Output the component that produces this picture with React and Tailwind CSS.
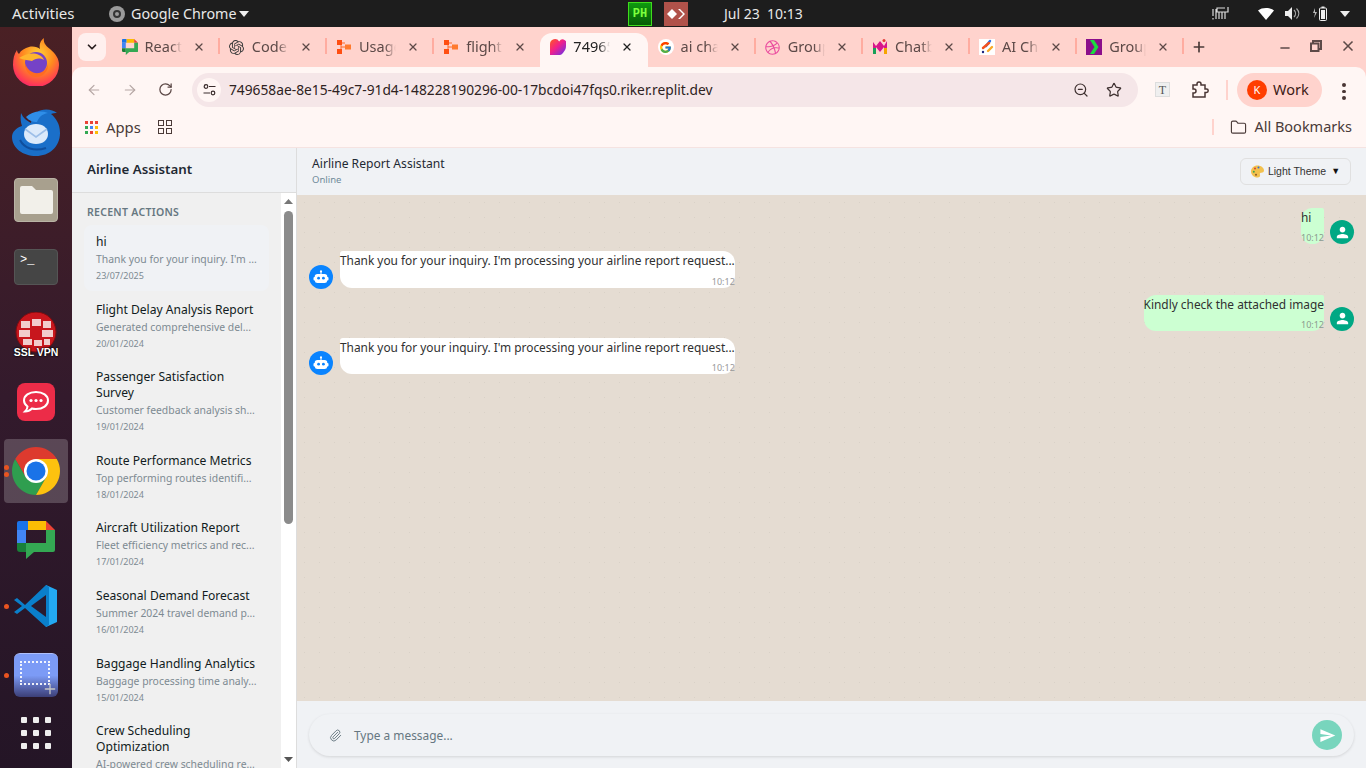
import React from "react";
import { ArrowLeft, ArrowRight, RotateCw, Star, ZoomOut, Folder, ChevronDown, X, Plus, Minus, Paperclip } from "lucide-react";
import { FcGoogle } from "react-icons/fc";
import { SiOpenai } from "react-icons/si";
import { FaDribbble } from "react-icons/fa";
import { MdPerson, MdSend } from "react-icons/md";

const chromeFont = "font-['Noto_Sans',sans-serif]";

const ChatIcon = ({ size = 16 }) => (
    <svg width={size} height={size} viewBox="0 0 38 38">
        <path d="M0 9V2a2 2 0 012-2h9v9z" fill="#1a73e8" />
        <path d="M11 0h18v9H11z" fill="#fbbc04" />
        <path d="M29 0l9 9h-9z" fill="#ea4335" />
        <path d="M0 9h9v13H0z" fill="#4285f4" />
        <path d="M0 22h9v9H3a3 3 0 01-3-3z" fill="#188038" />
        <path d="M29 9h9v20a2 2 0 01-2 2H17l-8 7V22h20z" fill="#34a853" />
    </svg>
);

const OrangeIcon = () => (
    <svg width="16" height="16" viewBox="0 0 16 16">
        <path d="M3 4h6M5 4v8M5 8h6" stroke="#ff6a2b" strokeWidth="1" fill="none" />
        <rect x="1" y="1" width="5" height="5" fill="#ff4f12" />
        <rect x="1" y="10" width="5" height="5" fill="#ff4f12" />
        <rect x="9" y="5.5" width="6" height="5" fill="#ff7a2e" />
    </svg>
);

const HeartIcon = () => (
    <svg width="16" height="16" viewBox="0 0 16 16">
        <defs>
            <linearGradient id="lov" x1="0" y1="0" x2="1" y2="1">
                <stop offset="0" stopColor="#ff5a1f" />
                <stop offset="0.45" stopColor="#f2208a" />
                <stop offset="1" stopColor="#5a32f5" />
            </linearGradient>
        </defs>
        <path d="M0 5a5 5 0 019.2-2.6A3.9 3.9 0 0116 7c0 2-.6 4-2 5.5-.8.9-1.8 3.5-4 3.5H0z" fill="url(#lov)" />
    </svg>
);

const MultiIcon = () => (
    <svg width="16" height="16" viewBox="0 0 16 16">
        <path d="M1 15V3l3 4 4-5 4 5 3-5v13h-3V8l-4 5-4-5v7z" fill="#d8168a" />
        <path d="M1 15V9h3v6z" fill="#18a058" />
        <path d="M12 15V9h3v6z" fill="#f5a400" />
        <circle cx="12" cy="1.5" r="1.5" fill="#e53935" />
    </svg>
);

const StrokesIcon = () => (
    <svg width="16" height="16" viewBox="0 0 16 16">
        <rect width="16" height="16" fill="#fff" />
        <path d="M7 7l4-5" stroke="#2b6de8" strokeWidth="2.4" strokeLinecap="round" />
        <path d="M4 9l6-5" stroke="#f4511e" strokeWidth="2.4" strokeLinecap="round" />
        <path d="M9 12l4-4" stroke="#f9a825" strokeWidth="2.4" strokeLinecap="round" />
        <circle cx="4" cy="13" r="1.2" fill="#1a237e" />
    </svg>
);

const ChevronIcon = () => (
    <svg width="16" height="16" viewBox="0 0 16 16">
        <rect width="16" height="16" fill="#8b0f8b" />
        <path d="M4 1h4l4.5 7L8 15H4l4.5-7z" fill="#1bdc3f" />
    </svg>
);

const tabs = [
    { title: "React", icon: <ChatIcon /> },
    { title: "Code", icon: <SiOpenai size={15} className="text-[#3c3c3c]" /> },
    { title: "Usage", icon: <OrangeIcon /> },
    { title: "flight", icon: <OrangeIcon /> },
    { title: "74965", icon: <HeartIcon />, active: true },
    { title: "ai chat", icon: <span className="w-4 h-4 rounded-full bg-white flex items-center justify-center"><FcGoogle size={13} /></span> },
    { title: "Group", icon: <FaDribbble size={15} className="text-[#ea4c9f]" /> },
    { title: "Chatbot", icon: <MultiIcon /> },
    { title: "AI Chat", icon: <StrokesIcon /> },
    { title: "Group", icon: <ChevronIcon /> },
];

const actions = [
    { title: "hi", desc: "Thank you for your inquiry. I'm ...", date: "23/07/2025", active: true },
    { title: "Flight Delay Analysis Report", desc: "Generated comprehensive del...", date: "20/01/2024" },
    { title: "Passenger Satisfaction Survey", desc: "Customer feedback analysis sh...", date: "19/01/2024" },
    { title: "Route Performance Metrics", desc: "Top performing routes identifi...", date: "18/01/2024" },
    { title: "Aircraft Utilization Report", desc: "Fleet efficiency metrics and rec...", date: "17/01/2024" },
    { title: "Seasonal Demand Forecast", desc: "Summer 2024 travel demand p...", date: "16/01/2024" },
    { title: "Baggage Handling Analytics", desc: "Baggage processing time analy...", date: "15/01/2024" },
    { title: "Crew Scheduling Optimization", desc: "AI-powered crew scheduling re...", date: "14/01/2024" },
];

const BotIcon = () => (
    <svg width="16" height="16" viewBox="0 0 16 16" fill="#fff">
        <circle cx="8" cy="2.4" r="1.1" />
        <rect x="7.5" y="2.5" width="1" height="3" />
        <path d="M4.5 5h7A2.8 2.8 0 0114.3 7.8v.2h.2a1 1 0 011 1v1.5a1 1 0 01-1 1h-.2A2.8 2.8 0 0111.5 14h-7a2.8 2.8 0 01-2.8-2.5h-.2a1 1 0 01-1-1V9a1 1 0 011-1h.2v-.2A2.8 2.8 0 014.5 5z" />
        <circle cx="5.6" cy="9.2" r="1.4" fill="#0a84ff" />
        <circle cx="10.4" cy="9.2" r="1.4" fill="#0a84ff" />
    </svg>
);

const PaletteIcon = () => (
    <svg width="13" height="13" viewBox="0 0 13 13">
        <path d="M6.5 0.500C10 0.500 13 2.800 13 5.500c0 1.800-1.500 2.300-3 2.200-1.200 0-1.500 1-1 2 .5 1.300-.5 2.800-2.500 2.800C2.800 12.500 0 9.800 0 6.500S2.800 0.500 6.500 0.500z" fill="#f2c14e" />
        <circle cx="4" cy="3.500" r="1" fill="#d8402f" />
        <circle cx="7.500" cy="2.500" r="1" fill="#2f6fd8" />
        <circle cx="2.800" cy="6.800" r="1" fill="#3fa34d" />
        <circle cx="5" cy="9.800" r="1" fill="#8a5a2b" />
    </svg>
);

const FirefoxLogo = () => (
    <svg width="46" height="48" viewBox="0 0 46 48">
        <defs>
            <radialGradient id="ffa" cx="0.55" cy="0.35" r="0.75">
                <stop offset="0" stopColor="#ffd43a" />
                <stop offset="0.45" stopColor="#ff8a1f" />
                <stop offset="0.8" stopColor="#ff3a55" />
                <stop offset="1" stopColor="#e3127c" />
            </radialGradient>
        </defs>
        <path d="M31 0c-1 5 2 8 6 11 6 5 9 10 9 16a23 22 0 01-46 0C0 21 1 16 4 12c0 2 1 3 2 4 2-4 6-6 10-7 4-1 9 0 11 2-1-4 0-8 4-11z" fill="url(#ffa)" />
        <circle cx="23" cy="25" r="11" fill="#7542c7" />
        <path d="M6 20c6-4 14-6 20-3 3 1 4 3 5 5-5-3-9-1-12 1-3-1-8-1-13-3z" fill="#ffb52e" />
        <path d="M12 25c2 7 8 11 14 10 5-1 9-5 9-10 1 8-5 14-12 14-6 0-11-6-11-14z" fill="#ff6b22" />
    </svg>
);

const ThunderbirdLogo = () => (
    <svg width="48" height="48" viewBox="0 0 48 48">
        <path d="M9 5c-1 6 0 10 1 13C4 20 0 24 0 29c0 11 11 19 24 19s24-9 24-23c0-9-4-15-9-19 2-1 4-1 6-1-5-4-15-5-21 0-3 2-5 6-5 10-4-2-8-5-10-10z" fill="#1a6fc9" />
        <path d="M14 9c5-5 14-7 22-4-6 1-9 4-11 9-4 0-8-1-11-5z" fill="#2f8ee8" />
        <path d="M12 26c0-6 5-10 12-10s12 4 12 10-5 10-12 10-12-4-12-10z" fill="#dceafa" />
        <path d="M13 21l11 8 11-8" stroke="#9dbfe8" strokeWidth="1.6" fill="none" />
        <path d="M8 32c4 8 14 12 26 8" stroke="#0f4f9e" strokeWidth="2" fill="none" />
    </svg>
);

const FilesLogo = () => (
    <div className="w-11 h-11 rounded bg-[#a8a08e] flex items-center justify-center border border-[#b9b3a5]">
        <svg width="33" height="28" viewBox="0 0 33 28">
            <path d="M2 0h10l4 4h15a2 2 0 012 2v20a2 2 0 01-2 2H2a2 2 0 01-2-2V2a2 2 0 012-2z" fill="#f2f0ea" />
        </svg>
    </div>
);

const TerminalLogo = () => (
    <div className="w-11 h-9 rounded bg-[#454545] border border-[#555] px-[5px] pt-[3px] font-['Liberation_Mono',monospace] text-[12px] leading-[14px] text-white">
        &gt;_
    </div>
);

const SslLogo = () => (
    <div className="relative w-11 h-12 flex justify-center">
        <svg width="44" height="44" viewBox="0 0 44 44">
            <circle cx="22" cy="20" r="20" fill="#c8161d" />
            <circle cx="22" cy="20" r="20" fill="none" stroke="#7d0c10" strokeWidth="1" />
            <g fill="#f2cccc">
                <rect x="7" y="9" width="9" height="7" /><rect x="18" y="7" width="9" height="7" /><rect x="29" y="9" width="8" height="7" />
                <rect x="5" y="18" width="11" height="7" /><rect x="28" y="18" width="11" height="7" />
                <rect x="9" y="27" width="9" height="6" /><rect x="20" y="28" width="8" height="6" /><rect x="30" y="27" width="6" height="6" />
            </g>
        </svg>
        <span className="absolute bottom-[3px] left-[-2px] right-[-2px] text-center font-['Liberation_Sans',sans-serif] font-bold text-[10.500px] leading-none text-white [text-shadow:0_0_2px_#000,0_0_2px_#000]">SSL VPN</span>
    </div>
);

const RocketLogo = () => (
    <div className="w-[38px] h-[38px] rounded-lg bg-[#ec2c48] flex items-center justify-center">
        <svg width="28" height="24" viewBox="0 0 28 24">
            <path d="M14 2c7 0 12 3.500 12 8.500S21 19 14 19c-1.500 0-3-.2-4-.5-1.500 1.500-4 3-7 3 1.500-1.500 2.500-3.500 2.500-5C3.500 15 2 13 2 10.500 2 5.500 7 2 14 2z" fill="none" stroke="#fff" strokeWidth="2" />
            <circle cx="9" cy="10.500" r="1.600" fill="#fff" /><circle cx="14" cy="10.500" r="1.600" fill="#fff" /><circle cx="19" cy="10.500" r="1.600" fill="#fff" />
        </svg>
    </div>
);

const ChromeLogo = () => (
    <svg width="48" height="48" viewBox="0 0 48 48">
        <path d="M44.780 12A24 24 0 003.220 12L13.600 30 24 12z" fill="#dd3a2e" />
        <path d="M3.220 12A24 24 0 0024 48L34.400 30H13.600z" fill="#2f9e4f" />
        <path d="M44.780 12A24 24 0 0124 48L34.400 30 24 12z" fill="#fdc20f" />
        <circle cx="24" cy="24" r="12" fill="#fff" />
        <circle cx="24" cy="24" r="9.500" fill="#1a73e8" />
    </svg>
);

const VscodeLogo = () => (
    <svg width="44" height="42" viewBox="0 0 44 42">
        <path d="M32 0l11 5v32l-11 5z" fill="#23a9f2" />
        <path d="M32 0L11 20 3 13l-3 2 8 6-8 6 3 2 8-6 21 19 3-2V2z" fill="#0a7fcb" />
        <path d="M32 10v22L17 21z" fill="#2a1a2e" />
    </svg>
);

const ScreenshotLogo = () => (
    <div className="relative w-11 h-11 rounded-md bg-gradient-to-b from-[#7c9bf6] from-50% to-[#3c3f78] border-t border-[#aebffa]">
        <div className="absolute left-[6px] top-[7px] w-[30px] h-[24px] border-2 border-dotted border-white/90" />
        <Plus className="absolute right-[0px] bottom-[0px] text-[#c5c5c5]" size={16} strokeWidth={2} />
    </div>
);

const AppGrid = () => (
    <div className="grid grid-cols-3 gap-x-[6px] gap-y-[7px]">
        {Array.from({ length: 9 }).map((_, i) => (
            <span key={i} className="w-[6px] h-[6px] rounded-[1px] bg-[#eee]" />
        ))}
    </div>
);

const dockItems = [
    { h: "h-[70px]", node: <FirefoxLogo /> },
    { h: "h-[70px]", node: <ThunderbirdLogo /> },
    { h: "h-[66px]", node: <FilesLogo /> },
    { h: "h-[68px]", node: <TerminalLogo /> },
    { h: "h-[70px]", node: <SslLogo /> },
    { h: "h-[62px]", node: <RocketLogo /> },
    { h: "h-[76px]", node: <ChromeLogo />, active: true, dots: 2 },
    { h: "h-[56px]", node: <div className="mt-[5px]"><ChatIcon size={38} /></div> },
    { h: "h-[82px]", node: <VscodeLogo />, dots: 1 },
    { h: "h-[56px]", node: <ScreenshotLogo />, dots: 1 },
    { h: "h-[60px]", node: <AppGrid /> },
];

const Dock = () => (
    <div className="w-[72px] shrink-0 flex flex-col bg-gradient-to-b from-[#4a2024] via-[#331a2c] to-[#241526]">
        {dockItems.map((item, i) => (
            <div key={i} className={`relative ${item.h} shrink-0 flex items-center justify-center`}>
                {item.active && <div className="absolute left-[4px] top-[6px] w-[64px] h-[64px] rounded bg-white/20" />}
                {item.dots && (
                    <div className="absolute left-[4px] top-0 bottom-0 flex flex-col justify-center gap-[2px]">
                        {Array.from({ length: item.dots }).map((_, d) => (
                            <span key={d} className="w-[5px] h-[5px] rounded-full bg-[#e95420]" />
                        ))}
                    </div>
                )}
                <div className="relative">{item.node}</div>
            </div>
        ))}
    </div>
);

const TopBar = () => (
    <div className={`h-[27px] shrink-0 bg-[#1d1d1d] flex items-center text-[14px] text-[#e8e8e8] ${chromeFont}`}>
        <span className="ml-[12px] w-[97px] text-[15px]">Activities</span>
        <span className="w-4 h-4 rounded-full bg-[#9a9a9a] flex items-center justify-center">
            <span className="w-[8px] h-[8px] rounded-full border-2 border-[#333]" />
        </span>
        <span className="ml-[6px] w-[104px] whitespace-nowrap text-[14.300px]">Google Chrome</span>
        <svg className="ml-[4px]" width="10" height="6" viewBox="0 0 10 6"><path d="M0 0h10L5 6z" fill="#eee" /></svg>
        <div className="ml-[379px] w-[24px] h-[24px] bg-gradient-to-b from-[#0f9a0f] to-[#075c07] border border-[#3fdc1c] flex items-center justify-center font-['Liberation_Mono',monospace] font-bold text-[12px] text-[#7dff3d]">PH</div>
        <div className="ml-[12px] w-[24px] h-[24px] bg-[#b0524a] flex items-center justify-center">
            <svg width="18" height="12" viewBox="0 0 18 12">
                <path d="M5 1l5 5-5 5-5-5z" fill="#fff" />
                <path d="M11 1l5 5-5 5 2 0 5-5-5-5z" fill="#fff" />
            </svg>
        </div>
        <span className="ml-[36px] whitespace-pre text-[14px]">Jul 23  10:13</span>
        <div className="ml-auto flex items-center text-[#eee]">
            <svg width="17" height="15" viewBox="0 0 17 15" fill="none" stroke="#ddd" strokeWidth="1.200">
                <path d="M1 3v7M1 12v1.500M4 3v10M7 6v7M10 6v7M13 6v7M16 1v5H5V2h8" />
            </svg>
            <svg className="ml-[29px]" width="16" height="12" viewBox="0 0 16 12"><path d="M0 2.500C4-.800 12-.800 16 2.500L8 12z" fill="#fff" /></svg>
            <svg className="ml-[11px]" width="15" height="13" viewBox="0 0 15 13" fill="#eee">
                <path d="M0 4h3l4-4v13L3 9H0z" />
                <path d="M9 3c2 2 2 5 0 7M11.500 1.500c3 3 3 7 0 10" stroke="#aaa" strokeWidth="1.200" fill="none" />
            </svg>
            <svg className="ml-[12px]" width="15" height="15" viewBox="0 0 15 15">
                <path d="M3 2L1 7h2l-1 5 3-6H3z" fill="#bbb" />
                <rect x="7.500" y="2" width="7" height="12.500" rx="1" fill="none" stroke="#eee" />
                <rect x="9" y="4" width="4" height="9" fill="#eee" />
                <rect x="9.500" y="0.500" width="3" height="1.500" fill="#eee" />
            </svg>
            <svg className="ml-[13px] mr-[16px]" width="10" height="6" viewBox="0 0 10 6"><path d="M0 0h10L5 6z" fill="#eee" /></svg>
        </div>
    </div>
);

const TabStrip = () => (
    <div className={`h-[40px] shrink-0 bg-[#ffd3cd] flex items-end ${chromeFont}`}>
        <div className="ml-[6px] mb-[6px] w-[28px] h-[28px] rounded-lg bg-[#fff0ee] flex items-center justify-center">
            <ChevronDown size={14} strokeWidth={3} className="text-[#2a2020]" />
        </div>
        <div className="ml-[5.600px] flex">
            {tabs.map((t, i) => {
                const nextActive = tabs[i + 1]?.active;
                return (
                    <div key={i} className={`relative w-[107.200px] h-[34px] flex items-center pl-[10px] pb-[6px] ${t.active ? "bg-[#fff6f4] rounded-t-xl" : ""}`}>
                        <span className="w-4 h-4 shrink-0 flex items-center justify-center">{t.icon}</span>
                        <span className={`ml-[7px] w-[37px] overflow-hidden whitespace-nowrap text-[14.500px] [mask-image:linear-gradient(to_right,black_70%,transparent)] ${t.active ? "text-[#222]" : "text-[#5d4a48]"}`}>{t.title}</span>
                        <X size={12} strokeWidth={2.500} className={`ml-[11px] ${t.active ? "text-[#222]" : "text-[#5d4a48]"}`} />
                        {!t.active && !nextActive && i !== 3 && <span className="absolute right-[-1px] top-[5px] w-[2px] h-[16px] bg-[#ffaca0]" />}
                    </div>
                );
            })}
        </div>
        <Plus size={16} strokeWidth={2.500} className="ml-[8px] mb-[12px] text-[#4a3a38]" />
        <div className="ml-auto mb-[12px] flex items-center text-[#5d4a48]">
            <Minus size={14} strokeWidth={2.500} className="mt-[5px]" />
            <svg className="ml-[18px]" width="12" height="12" viewBox="0 0 12 12" fill="none" stroke="#5d4a48" strokeWidth="2">
                <path d="M3 3V1h8v8H9" /><rect x="1" y="3.500" width="7.500" height="7.500" />
            </svg>
            <X size={16} strokeWidth={2.500} className="ml-[18px] mr-[10px]" />
        </div>
    </div>
);

const Toolbar = () => (
    <div className={`h-[40px] shrink-0 bg-[#fff6f4] rounded-t-[10px] flex items-start pt-[6px] ${chromeFont}`}>
        <ArrowLeft size={16} strokeWidth={1.800} className="ml-[14px] mt-[9px] text-[#b5a6a4]" />
        <ArrowRight size={16} strokeWidth={1.800} className="ml-[20px] mt-[9px] text-[#b5a6a4]" />
        <RotateCw size={15} strokeWidth={2} className="ml-[20px] mt-[9px] text-[#5a4644]" />
        <div className="ml-[19px] w-[946px] h-[34px] rounded-full bg-[#f5e6e8] flex items-center">
            <div className="ml-[5px] w-[24px] h-[24px] rounded-full bg-[#fff6f4] flex items-center justify-center">
                <svg width="13" height="12" viewBox="0 0 13 12" fill="none" stroke="#3a2c2c" strokeWidth="1.200">
                    <circle cx="3" cy="2.500" r="1.800" /><path d="M6 2.500h6.500M0.500 9H7" /><circle cx="10" cy="9" r="1.800" />
                </svg>
            </div>
            <span className="ml-[8px] text-[13.780px] text-[#2e2222] whitespace-nowrap">749658ae-8e15-49c7-91d4-148228190296-00-17bcdoi47fqs0.riker.replit.dev</span>
            <ZoomOut size={16} strokeWidth={1.800} className="ml-auto text-[#3e3030]" />
            <Star size={16} strokeWidth={1.800} className="ml-[17px] mr-[16px] text-[#3e3030]" />
        </div>
        <div className="ml-[17px] mt-[9px] w-[15px] h-[15px] bg-[#efefef] border border-[#ddd] flex items-center justify-center font-['Liberation_Serif',serif] text-[12px] leading-none text-[#555]">T</div>
        <svg className="ml-[22px] mt-[8px]" width="17" height="17" viewBox="0 0 17 17" fill="none" stroke="#4a3634" strokeWidth="1.500">
            <path d="M1 4h4V3a2 2 0 014 0v1h4v4h1.500a1.700 1.700 0 010 3.400H13V16H1v-4h1a2 2 0 000-4H1z" />
        </svg>
        <span className="ml-[17px] mt-[7px] w-[2px] h-[20px] bg-[#ffd3cd]" />
        <div className="ml-[9px] w-[85px] h-[34px] rounded-full bg-[#ffd3cd] flex items-center">
            <span className="ml-[10px] w-[20px] h-[20px] rounded-full bg-[#ff3d00] flex items-center justify-center text-[11px] text-white">K</span>
            <span className="ml-[6px] text-[14.500px] text-[#3c1a16]">Work</span>
        </div>
        <div className="ml-[20px] mt-[10px] flex flex-col gap-[3px]">
            {[0, 1, 2].map(d => <span key={d} className="w-[3.500px] h-[3.500px] rounded-full bg-[#4a3634]" />)}
        </div>
    </div>
);

const BookmarksBar = () => (
    <div className={`h-[41px] shrink-0 bg-[#fff6f4] border-b border-[#f5e3e1] flex items-center ${chromeFont}`}>
        <div className="ml-[13px] grid grid-cols-3 gap-[2px]">
            {["#ea4335", "#ea4335", "#ea4335", "#34a853", "#4285f4", "#fbbc04", "#34a853", "#ea4335", "#fbbc04"].map((c, i) => (
                <span key={i} className="w-[3px] h-[3px]" style={{ backgroundColor: c }} />
            ))}
        </div>
        <span className="ml-[8px] text-[14.800px] text-[#4a3a38]">Apps</span>
        <div className="ml-[17px] grid grid-cols-2 gap-[2px]">
            {[0, 1, 2, 3].map(i => <span key={i} className="w-[6px] h-[6px] border-[1.500px] border-[#4a3a38]" />)}
        </div>
        <span className="ml-auto w-[2px] h-[16px] bg-[#ffd3cd]" />
        <Folder size={17} strokeWidth={1.600} className="ml-[16px] text-[#4a3a38]" />
        <span className="ml-[7px] mr-[14px] text-[14.500px] text-[#4a3a38]">All Bookmarks</span>
    </div>
);

const Sidebar = () => (
    <div className="w-[225px] shrink-0 flex flex-col border-r border-[#ddd] min-h-0">
        <div className="h-[45px] shrink-0 bg-[#f0f2f5] border-b border-[#ddd] flex items-center pl-[15px] text-[13.300px] font-semibold text-[#1f2933]">
            Airline Assistant
        </div>
        <div className="flex-1 flex min-h-0">
            <div className="w-[209px] bg-[#f0f0f0] overflow-hidden px-[12px] pt-[12px]">
                <div className="text-[10.500px] leading-[14px] font-semibold tracking-[0.3px] text-[#667781] pl-[3px]">RECENT ACTIONS</div>
                <div className="mt-[6px]">
                    {actions.map((a, i) => (
                        <div key={i} className={`px-[12px] pt-[9px] pb-[8px] mb-[1.600px] rounded-lg ${a.active ? "bg-[#f0f2f5]" : ""}`}>
                            <div className="text-[12.100px] leading-[16px] text-[#111b21]">{a.title}</div>
                            <div className="mt-[1px] text-[10.400px] leading-[16px] text-[#7d8a92] whitespace-nowrap">{a.desc}</div>
                            <div className="mt-[2px] text-[9px] leading-[14px] text-[#7d8a92]">{a.date}</div>
                        </div>
                    ))}
                </div>
            </div>
            <div className="w-[15px] bg-white flex flex-col items-center">
                <svg className="mt-[6px]" width="9" height="5" viewBox="0 0 9 5"><path d="M4.500 0L9 5H0z" fill="#777" /></svg>
                <div className="mt-[7px] w-[9px] h-[313px] rounded-full bg-[#8b8b8b]" />
                <svg className="mt-auto mb-[6px]" width="9" height="5" viewBox="0 0 9 5"><path d="M0 0h9L4.500 5z" fill="#555" /></svg>
            </div>
        </div>
    </div>
);

const UserMessage = ({ text, className }) => (
    <div className={`flex justify-end items-end pr-[12px] ${className}`}>
        <div className="bg-[#ccffd2] rounded-tl-[12px] rounded-tr-[2px] rounded-b-[12px] h-[36px] flex flex-col">
            <div className="text-[11.880px] leading-[18.500px] text-[#303030]">{text}</div>
            <div className="mt-auto text-right text-[9px] leading-[12px] text-[#8c9a90]">10:12</div>
        </div>
        <div className="ml-[6px] w-[24px] h-[24px] rounded-full bg-[#00a884] flex items-center justify-center">
            <MdPerson size={17} className="text-white" />
        </div>
    </div>
);

const BotMessage = ({ className }) => (
    <div className={`flex items-end pl-[12px] ${className}`}>
        <div className="w-[24px] h-[24px] rounded-full bg-[#0a84ff] flex items-center justify-center">
            <BotIcon />
        </div>
        <div className="ml-[7px] mb-[1px] bg-white rounded-tl-[3px] rounded-tr-[12px] rounded-b-[12px] h-[36.500px] flex flex-col">
            <div className="text-[11.880px] leading-[18.500px] text-[#303030]">Thank you for your inquiry. I'm processing your airline report request...</div>
            <div className="mt-auto text-right text-[9px] leading-[12px] text-[#999]">10:12</div>
        </div>
    </div>
);

const Chat = () => (
    <div className="flex-1 min-w-0 flex flex-col">
        <div className="h-[47px] shrink-0 bg-[#f0f2f5] flex items-center justify-between pl-[15px] pr-[15px]">
            <div className="mb-[2px]">
                <div className="text-[12.130px] leading-[16px] text-[#1f2933]">Airline Report Assistant</div>
                <div className="mt-[2px] text-[9.500px] leading-[12px] text-[#6f8a99]">Online</div>
            </div>
            <div className="w-[111px] h-[27px] rounded-md border border-[#e0e0e0] bg-[#f0f2f5] flex items-center justify-center font-['Liberation_Sans',sans-serif] text-[10.500px] text-[#333]">
                <span className="mr-[4px]"><PaletteIcon /></span>
                Light Theme
                <span className="ml-[5px] text-[9px] text-[#111]">▼</span>
            </div>
        </div>
        <div className="flex-1 bg-[#e5dcd2] bg-[radial-gradient(#d9d1c7_0.8px,transparent_0.8px)] bg-[length:15px_15px] pt-[13px]">
            <UserMessage text="hi" />
            <BotMessage className="mt-[7px]" />
            <UserMessage text="Kindly check the attached image" className="mt-[6px]" />
            <BotMessage className="mt-[7px]" />
        </div>
        <div className="h-[67px] shrink-0 bg-[#f0f2f5] px-[12px] pt-[1px] flex items-center">
            <div className="w-full h-[42px] rounded-[21px] bg-[#f0f2f5] shadow-[0_1px_3px_rgba(0,0,0,0.12)] flex items-center">
                <Paperclip size={13} strokeWidth={1.800} className="ml-[20px] text-[#6b7b85]" />
                <span className="ml-[12px] mt-[1px] text-[11.900px] text-[#667781]">Type a message...</span>
                <div className="ml-auto mr-[12px] w-[30px] h-[30px] rounded-full bg-[#78d5bd] flex items-center justify-center">
                    <MdSend size={17} className="text-white" />
                </div>
            </div>
        </div>
    </div>
);

const App = () => {
    return (
        <div className="w-screen h-screen overflow-hidden flex flex-col">
            <TopBar />
            <div className="flex-1 flex min-h-0">
                <Dock />
                <div className="flex-1 min-w-0 flex flex-col bg-[#ffd3cd]">
                    <TabStrip />
                    <Toolbar />
                    <BookmarksBar />
                    <div className="flex-1 flex min-h-0 bg-white font-['Noto_Sans',sans-serif]">
                        <Sidebar />
                        <Chat />
                    </div>
                </div>
            </div>
        </div>
    );
};

export default App;
